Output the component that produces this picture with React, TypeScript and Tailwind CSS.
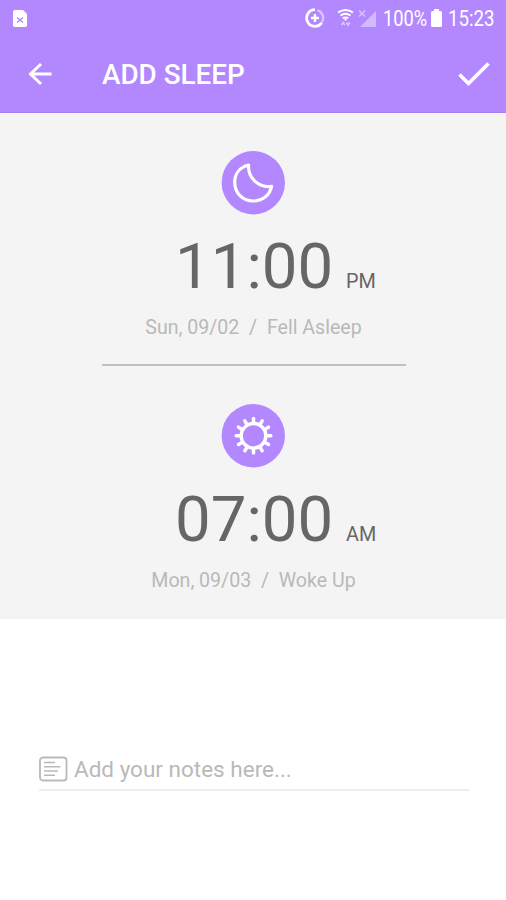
import React from "react";

function StatusBar() {
  return (
    <div className="flex h-9 items-center">
      <svg className="ml-[13px] h-[17px] w-[14px]" viewBox="0 0 14 17">
        <path d="M2 0h8l4 4v11.2a1.8 1.8 0 0 1-1.8 1.8H1.8A1.8 1.8 0 0 1 0 15.200V2a2 2 0 0 1 2-2z" fill="#fff" />
        <path d="M4 7.500l6 5M10 7.500l-6 5" stroke="#b388ff" strokeWidth="1.500" />
      </svg>
      <svg className="ml-[278px] h-5 w-5" viewBox="0 0 20 20" fill="none">
        <path d="M10 1.700a8.300 8.300 0 1 0 6.800 13" stroke="#fff" strokeWidth="2.800" />
        <path d="M12.500 2.200a8.300 8.300 0 0 1 4.600 11.800" stroke="#fff" strokeOpacity=".5" strokeWidth="2.400" />
        <path d="M10 6v8M6 10h8" stroke="#fff" strokeWidth="2.400" />
      </svg>
      <svg className="ml-[12px] h-[18px] w-[17px]" viewBox="0 0 17 18" fill="none">
        <path d="M1 3.500Q8.500-1.500 16 3.500M3.500 6.500q5-3.400 10 0M5.800 9.300q2.700-1.900 5.400 0" stroke="#fff" strokeWidth="1.900" />
        <path d="M6.500 9.500h4l-2 2.500z" fill="#fff" />
        <path d="M4.500 16l1.700-2.500L7.800 16M9.500 13.500l1.600 2.500 1.600-2.500" stroke="#fff" strokeOpacity=".55" strokeWidth="1.500" />
      </svg>
      <svg className="ml-[4px] h-[19px] w-[19px]" viewBox="0 0 19 19" fill="none">
        <path d="M18 2v16H2z" fill="#fff" fillOpacity=".42" />
        <path d="M1 1.500l6 6M7 1.500l-6 6" stroke="#fff" strokeOpacity=".5" strokeWidth="1.400" />
      </svg>
      <span className="ml-[6px] mt-[2px] w-[46px] origin-left scale-x-[0.83] whitespace-nowrap text-[22px] leading-6 text-white">100%</span>
      <svg className="ml-[2px] h-[18px] w-[11px]" viewBox="0 0 11 18">
        <path d="M3 0h5v2h1.500A1.500 1.500 0 0 1 11 3.500v13a1.500 1.500 0 0 1-1.500 1.500h-8A1.500 1.500 0 0 1 0 16.500v-13A1.500 1.500 0 0 1 1.500 2H3z" fill="#fff" />
      </svg>
      <span className="ml-[6px] mt-[2px] w-[46px] origin-left scale-x-[0.85] whitespace-nowrap text-[22px] leading-6 text-white">15:23</span>
    </div>
  );
}

function MoonIcon() {
  return (
    <svg className="size-16" viewBox="0 0 64 64" fill="none">
      <circle cx="32.300" cy="31.700" r="31.700" fill="#b388ff" />
      <path d="M27.600 14C18.500 16.300 13.700 23 13.700 31.300C13.700 42 21.500 50 32.200 50C41.500 50 48.600 44.500 50.600 35.300C38 37 26.600 27.500 27.600 14Z" stroke="#fff" strokeWidth="3.200" strokeLinejoin="round" />
    </svg>
  );
}

const rays = Array.from({ length: 12 }, (_, i) => i * 30);

function SunIcon() {
  return (
    <svg className="size-16" viewBox="0 0 64 64" fill="none">
      <circle cx="32.300" cy="31.700" r="31.700" fill="#b388ff" />
      <circle cx="32.500" cy="31.800" r="12.300" stroke="#fff" strokeWidth="3.400" />
      {rays.map((angle) => (
        <path key={angle} d="M32.500 18.500v-4" transform={`rotate(${angle} 32.5 31.8)`} stroke="#fff" strokeWidth="3.500" strokeLinecap="round" />
      ))}
    </svg>
  );
}

type TimeEntryProps = {
  icon: React.ReactNode;
  time: string;
  period: string;
  date: string;
  label: string;
};

function TimeEntry({ icon, time, period, date, label }: TimeEntryProps) {
  return (
    <section className="flex h-[253px] flex-col items-center pt-[38px]">
      {icon}
      <div className="mt-5 flex h-16 w-full items-baseline pl-[175px] leading-[64px] text-[#666]">
        <span className="w-[157px] text-[63.500px]">{time}</span>
        <span className="ml-[14px] text-[19.800px]">{period}</span>
      </div>
      <p className="mt-[17px] whitespace-pre pl-px text-[19.600px] leading-6 text-[#b9b9b9]">{`${date}  /  ${label}`}</p>
    </section>
  );
}

export default function App() {
  return (
    <main className="h-[900px] w-[506px] overflow-hidden bg-white font-['Roboto',sans-serif]">
      <header className="h-[113px] border-b border-[#a680ee] bg-[#b388ff]">
        <StatusBar />
        <div className="flex h-[76px] items-center">
          <svg className="ml-7 h-6 w-6" viewBox="0 0 24 24" fill="none" stroke="#fff" strokeWidth="3">
            <path d="M23.500 12H2.500M13 2L2.500 12L13 22" />
          </svg>
          <h1 className="ml-[50px] mt-[2px] text-[27.800px] font-medium leading-8 text-white">ADD SLEEP</h1>
          <svg className="ml-auto mr-4 h-6 w-8" viewBox="0 0 32 24" fill="none" stroke="#fff" strokeWidth="3.600">
            <path d="M1.500 12.500l9 9L30.500 1.500" />
          </svg>
        </div>
      </header>
      <div className="h-[506px] bg-[#f4f4f4]">
        <TimeEntry icon={<MoonIcon />} time="11:00" period="PM" date="Sun, 09/02" label="Fell Asleep" />
        <hr className="ml-[102px] -mt-[2px] mb-0 h-[2px] w-[304px] border-0 bg-[#c0c0c0]" />
        <TimeEntry icon={<SunIcon />} time="07:00" period="AM" date="Mon, 09/03" label="Woke Up" />
      </div>
      <div className="ml-[39px] mr-[37px] mt-[134px] flex h-[38px] items-center border-b-2 border-[#eee]">
        <svg className="mb-1 h-[26px] w-[29px]" viewBox="0 0 29 26" fill="none" stroke="#b9b9b9">
          <rect x="1" y="1.500" width="26.500" height="23" rx="3" strokeWidth="1.800" />
          <path d="M5 6.500h11M5 10.800h16.500M5 15h14M5 19.200h11" strokeWidth="1.600" />
        </svg>
        <span className="mb-1 ml-[6px] text-[22.500px] leading-7 text-[#b9b9b9]">Add your notes here...</span>
      </div>
    </main>
  );
}
